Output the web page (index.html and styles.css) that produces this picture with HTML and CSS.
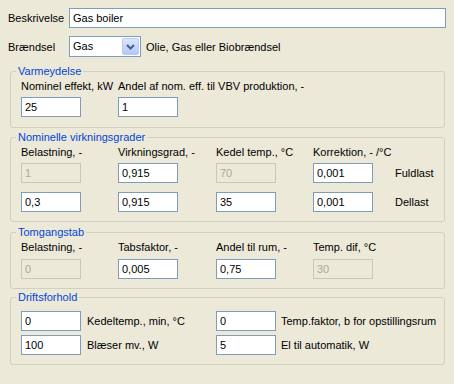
FILE: index.html
```html
<!DOCTYPE html>
<html lang="da">
<head>
  <meta charset="UTF-8" />
  <meta name="viewport" content="width=device-width, initial-scale=1.0"/>
  <title>Gas boiler</title>
  <link rel="stylesheet" href="styles.css">
</head>
<body>
  <div class="row">
    <label class="lbl" for="desc">Beskrivelse</label>
    <input class="txt wide" id="desc" type="text" value="Gas boiler">
  </div>

  <div class="row fuel">
    <span class="lbl">Brændsel</span>
    <div class="combo">
      <span class="combo-val">Gas</span>
      <span class="combo-btn">
        <svg width="9" height="6" viewBox="0 0 9 6"><polyline points="1,1 4.5,4.5 8,1" fill="none" stroke="#4D6185" stroke-width="2"/></svg>
      </span>
    </div>
    <span class="hint">Olie, Gas eller Biobrændsel</span>
  </div>

  <fieldset class="grp g1">
    <legend>Varmeydelse</legend>
    <div class="grid cols-2">
      <span class="cap">Nominel effekt, kW</span>
      <span class="cap">Andel af nom. eff. til VBV produktion, -</span>
      <input class="txt" type="text" value="25">
      <input class="txt" type="text" value="1">
    </div>
  </fieldset>

  <fieldset class="grp g2">
    <legend>Nominelle virkningsgrader</legend>
    <div class="grid cols-5">
      <span class="cap">Belastning, -</span>
      <span class="cap">Virkningsgrad, -</span>
      <span class="cap">Kedel temp., °C</span>
      <span class="cap">Korrektion, - /°C</span>
      <span></span>

      <input class="txt" type="text" value="1" disabled>
      <input class="txt" type="text" value="0,915">
      <input class="txt" type="text" value="70" disabled>
      <input class="txt" type="text" value="0,001">
      <span class="side">Fuldlast</span>

      <input class="txt" type="text" value="0,3">
      <input class="txt" type="text" value="0,915">
      <input class="txt" type="text" value="35">
      <input class="txt" type="text" value="0,001">
      <span class="side">Dellast</span>
    </div>
  </fieldset>

  <fieldset class="grp g3">
    <legend>Tomgangstab</legend>
    <div class="grid cols-4">
      <span class="cap">Belastning, -</span>
      <span class="cap">Tabsfaktor, -</span>
      <span class="cap">Andel til rum, -</span>
      <span class="cap">Temp. dif, °C</span>
      <input class="txt" type="text" value="0" disabled>
      <input class="txt" type="text" value="0,005">
      <input class="txt" type="text" value="0,75">
      <input class="txt" type="text" value="30" disabled>
    </div>
  </fieldset>

  <fieldset class="grp g4">
    <legend>Driftsforhold</legend>
    <div class="grid pairs">
      <input class="txt" type="text" value="0">
      <span class="side first">Kedeltemp., min, °C</span>
      <input class="txt" type="text" value="0">
      <span class="side">Temp.faktor, b for opstillingsrum</span>

      <input class="txt" type="text" value="100">
      <span class="side first">Blæser mv., W</span>
      <input class="txt" type="text" value="5">
      <span class="side">El til automatik, W</span>
    </div>
  </fieldset>
</body>
</html>
```

FILE: styles.css
```css
body {
  margin: 0;
  padding: 8px 0 0 0;
  background: #ECE9D8;
  font-family: "Liberation Sans", Arial, sans-serif;
  font-size: 11px;
  color: #000;
}

.row {
  display: flex;
  align-items: center;
  padding-left: 8px;
  padding-right: 8px;
}

.fuel {
  margin-top: 8px;
}

.lbl {
  width: 61px;
  flex: none;
}

.txt {
  box-sizing: border-box;
  width: 60px;
  height: 20px;
  margin: 0;
  padding: 0 3px;
  border: 1px solid #7F9DB9;
  background: #fff;
  font: inherit;
  color: #000;
  outline: none;
}

.txt:disabled {
  background: #ECE9D8;
  border-color: #C9C7BA;
  color: #ACA899;
}

.wide {
  flex: 1;
  width: auto;
}

.combo {
  box-sizing: border-box;
  display: flex;
  width: 72px;
  height: 21px;
  border: 1px solid #7F9DB9;
  background: #fff;
}

.combo-val {
  flex: 1;
  padding-left: 3px;
  line-height: 19px;
}

.combo-btn {
  box-sizing: border-box;
  width: 17px;
  height: 17px;
  margin: 1px;
  border: 1px solid #B9CCF4;
  border-radius: 2px;
  background: linear-gradient(#DCE6FD, #B3C8F5);
  display: flex;
  align-items: center;
  justify-content: center;
}

.hint {
  margin-left: 5px;
}

.grp {
  margin: 2px 9px 0 10px;
  padding: 1px 0 9px 10px;
  border: 1px solid #D0D0BF;
  border-radius: 3px;
  min-width: 0;
}

.grp legend {
  padding: 0 2px;
  margin-left: -5px;
  line-height: 14px;
  color: #0046D5;
}

.g1 {
  margin-top: 7px;
  padding-bottom: 10px;
}

.g3 {
  margin-top: 3px;
}

.g4 {
  margin-top: 1px;
  padding-top: 7px;
}

.grid {
  display: grid;
  align-items: start;
}

.cap {
  line-height: 14px;
  white-space: nowrap;
}

.cols-2 {
  grid-template-columns: 97px auto;
  grid-template-rows: 18px 20px;
}

.cols-5 {
  grid-template-columns: 97px 98px 97px 82px auto;
  grid-template-rows: 18px 29px 20px;
}

.cols-4 {
  grid-template-columns: 97px 98px 97px auto;
  grid-template-rows: 19px 20px;
}

.pairs {
  grid-template-columns: 60px 135px 60px auto;
  row-gap: 4px;
}

.side {
  line-height: 20px;
  white-space: nowrap;
  padding-left: 5px;
}

.cols-5 .side {
  padding-left: 0;
}

.side.first {
  padding-left: 6px;
}
```
